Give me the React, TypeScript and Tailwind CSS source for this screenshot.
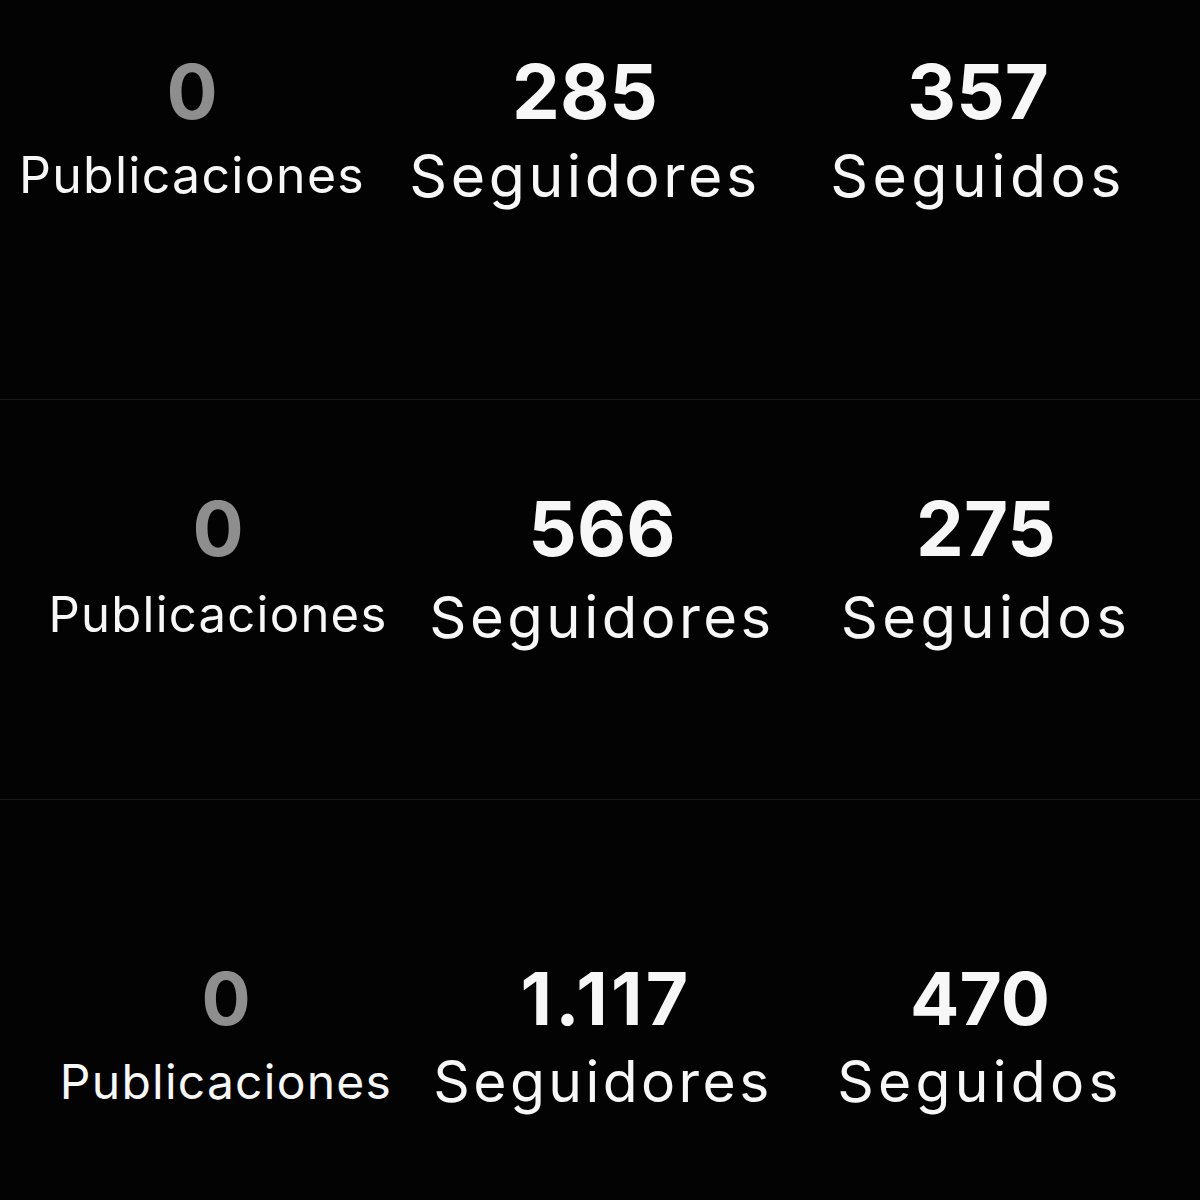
import React from "react";

type Item = {
  num: string;
  label: string;
  gray?: boolean;
  numCls: string;
  labelCls: string;
};

type Panel = {
  cls: string;
  colCls: string;
  items: Item[];
};

const panels: Panel[] = [
  {
    cls: "h-[400px] border-b border-[#171717] pt-[53px] pl-[0px] gap-[9px]",
    colCls: "w-[384px]",
    items: [
      { num: "0", gray: true, label: "Publicaciones", numCls: "text-[76px]", labelCls: "text-[50px] mt-[21px] tracking-[0.026em]" },
      { num: "285", label: "Seguidores", numCls: "text-[76px]", labelCls: "text-[59px] mt-[17px] tracking-[0.06em]" },
      { num: "357", label: "Seguidos", numCls: "text-[76px]", labelCls: "text-[59px] mt-[17px] tracking-[0.075em]" },
    ],
  },
  {
    cls: "h-[400px] border-b border-[#171717] pt-[90px] pl-[26px] gap-[0px]",
    colCls: "w-[384px]",
    items: [
      { num: "0", gray: true, label: "Publicaciones", numCls: "text-[76px]", labelCls: "text-[49px] mt-[24px] tracking-[0.026em]" },
      { num: "566", label: "Seguidores", numCls: "text-[76px]", labelCls: "text-[58px] mt-[22px] tracking-[0.06em]" },
      { num: "275", label: "Seguidos", numCls: "text-[76px]", labelCls: "text-[58px] mt-[22px] tracking-[0.075em]" },
    ],
  },
  {
    cls: "h-[400px] pt-[162px] pl-[38px] gap-[1px]",
    colCls: "w-[376px]",
    items: [
      { num: "0", gray: true, label: "Publicaciones", numCls: "text-[73px]", labelCls: "text-[48px] mt-[23px] tracking-[0.026em]" },
      { num: "1.117", label: "Seguidores", numCls: "text-[73px] tracking-[0.045em] pl-[6px]", labelCls: "text-[57px] mt-[18px] tracking-[0.06em]" },
      { num: "470", label: "Seguidos", numCls: "text-[73px]", labelCls: "text-[57px] mt-[18px] tracking-[0.075em]" },
    ],
  },
];

export default function App() {
  return (
    <div
      className="w-[1200px] h-[1200px] bg-[#030303] overflow-hidden flex flex-col"
      style={{ fontFamily: "Inter, 'Noto Sans', sans-serif" }}
    >
      {panels.map((p, i) => (
        <div key={i} className={`box-border flex flex-row items-start shrink-0 ${p.cls}`}>
          {p.items.map((it, j) => (
            <div key={j} className={`${p.colCls} shrink-0 flex flex-col items-center text-center whitespace-nowrap`}>
              <div
                className={`${it.numCls} leading-none font-bold ${it.gray ? "text-[#8e8e8e]" : "text-[#f7f7f7]"}`}
              >
                {it.num}
              </div>
              <div className={`${it.labelCls} leading-none font-normal text-[#f7f7f7]`}>
                {it.label}
              </div>
            </div>
          ))}
        </div>
      ))}
    </div>
  );
}
